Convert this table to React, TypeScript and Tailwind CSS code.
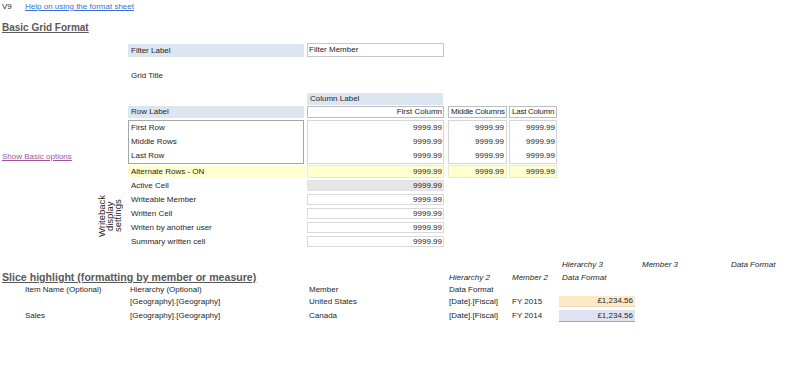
import React from "react";

const box = "border border-[#d6d6d6] flex flex-col";
const valRow = "h-[14px] flex items-center justify-end";

export default function App() {
  return (
    <div className="w-[800px] h-[373px] bg-white text-[#262626] text-[8px] font-['Liberation_Sans',Arial,sans-serif] grid grid-cols-[25px_103px_177px_141px_62px_51px_80px_90px_1fr] grid-rows-[13px_29px_16px_10px_15px_9px_13px_14px_16px_14px_16px_14px_14px_14px_14px_14px_14px_9px_14px_12px_12px_12px_15px] whitespace-nowrap">
      {/* header links */}
      <div className="col-start-1 row-start-1 pl-[2px] flex items-center">V9</div>
      <div className="col-start-2 col-span-3 row-start-1 flex items-center">
        <a href="#" className="text-[#3b6fd4] underline">Help on using the format sheet</a>
      </div>
      <div className="col-start-1 col-span-3 row-start-2 pl-[2px] flex items-center text-[10px] font-bold text-[#595959] underline">
        Basic Grid Format
      </div>

      {/* filter */}
      <div className="col-start-3 row-start-3 mt-[2px] mb-[1px] w-[176px] bg-[#dce6f1] pl-[3px] flex items-center">Filter Label</div>
      <div className="col-start-4 row-start-3 ml-[2px] w-[137px] mt-[1px] mb-[1px] border border-[#c8c8c8] pl-[1px] flex items-center">Filter Member</div>

      <div className="col-start-3 row-start-5 pl-[3px] flex items-center">Grid Title</div>

      {/* grid headers */}
      <div className="col-start-4 row-start-7 ml-[2px] w-[136px] mt-[1px] bg-[#dce6f1] pl-[3px] flex items-center">Column Label</div>
      <div className="col-start-3 row-start-8 mt-[1px] mb-[1px] w-[176px] bg-[#dce6f1] pl-[3px] flex items-center">Row Label</div>
      <div className="col-start-4 row-start-8 ml-[2px] w-[137px] mt-[1px] mb-[1px] border border-[#bdbdbd] pr-[1px] flex items-center justify-end">First Column</div>
      <div className="col-start-5 row-start-8 ml-[2px] w-[59px] mt-[1px] mb-[1px] border border-[#bdbdbd] pl-[2px] flex items-center tracking-[-0.25px]">Middle Columns</div>
      <div className="col-start-6 row-start-8 ml-[1px] w-[48px] mt-[1px] mb-[1px] border border-[#bdbdbd] pl-[2px] flex items-center tracking-[-0.25px]">Last Column</div>

      {/* body rows */}
      <div className="col-start-3 row-start-9 row-span-3 my-[1px] w-[176px] border border-[#a6a6a6] flex flex-col">
        {["First Row", "Middle Rows", "Last Row"].map((r) => (
          <div key={r} className="h-[14px] pl-[2px] flex items-center">{r}</div>
        ))}
      </div>
      <div className={`col-start-4 row-start-9 row-span-3 my-[1px] ml-[2px] w-[137px] pr-[1px] ${box}`}>
        {[0, 1, 2].map((i) => <div key={i} className={valRow}>9999.99</div>)}
      </div>
      <div className={`col-start-5 row-start-9 row-span-3 my-[1px] ml-[2px] w-[59px] pr-[2px] ${box}`}>
        {[0, 1, 2].map((i) => <div key={i} className={valRow}>9999.99</div>)}
      </div>
      <div className={`col-start-6 row-start-9 row-span-3 my-[1px] ml-[1px] w-[48px] pr-[1px] ${box}`}>
        {[0, 1, 2].map((i) => <div key={i} className={valRow}>9999.99</div>)}
      </div>
      <div className="col-start-1 col-span-2 row-start-11 pl-[2px] flex items-center">
        <a href="#" className="text-[#a0559b] underline">Show Basic options</a>
      </div>

      {/* alternate rows */}
      <div className="col-start-3 row-start-12 mb-[1px] bg-[#ffffcf] pl-[3px] flex items-center">Alternate Rows - ON</div>
      <div className="col-start-4 row-start-12 mb-[1px] ml-[2px] w-[137px] bg-[#ffffcf] border border-[#ecebd0] pr-[1px] flex items-center justify-end">9999.99</div>
      <div className="col-start-5 row-start-12 mb-[1px] ml-[2px] w-[59px] bg-[#ffffcf] border border-[#ecebd0] pr-[2px] flex items-center justify-end">9999.99</div>
      <div className="col-start-6 row-start-12 mb-[1px] ml-[1px] w-[48px] bg-[#ffffcf] border border-[#ecebd0] pr-[1px] flex items-center justify-end">9999.99</div>

      {/* writeback */}
      <div className="col-start-2 row-start-13 row-span-5 pr-[6px] pt-[4px] flex items-center justify-end">
        <div className="[writing-mode:vertical-rl] rotate-180 text-center text-[9.5px] leading-[8px]">
          Writeback<br />display<br />settings
        </div>
      </div>
      {[
        ["Active Cell", "bg-[#e6e6e6] border-[#e2e2e2]"],
        ["Writeable Member", "border-[#d9d9d9]"],
        ["Written Cell", "border-[#d9d9d9]"],
        ["Writen by another user", "border-[#d9d9d9]"],
        ["Summary written cell", "border-[#d9d9d9]"],
      ].map(([label, cls], i) => (
        <React.Fragment key={label}>
          <div className="col-start-3 pt-[1px] pb-[2px] pl-[3px] flex items-center" style={{ gridRowStart: 13 + i }}>{label}</div>
          <div className={`col-start-4 mt-[1px] mb-[2px] ml-[2px] w-[137px] border pr-[1px] flex items-center justify-end ${cls}`} style={{ gridRowStart: 13 + i }}>9999.99</div>
        </React.Fragment>
      ))}

      {/* slice highlight */}
      <div className="col-start-7 row-start-19 pl-[3px] italic flex items-center">Hierarchy 3</div>
      <div className="col-start-8 row-start-19 pl-[3px] italic flex items-center">Member 3</div>
      <div className="col-start-9 row-start-19 pl-[2px] italic flex items-center">Data Format</div>

      <div className="col-start-1 col-span-4 row-start-20 pl-[2px] flex items-center text-[10.6px] font-bold text-[#595959] underline">
        Slice highlight (formatting by member or measure)
      </div>
      <div className="col-start-5 row-start-20 pl-[3px] italic flex items-center">Hierarchy 2</div>
      <div className="col-start-6 row-start-20 pl-[4px] italic flex items-center">Member 2</div>
      <div className="col-start-7 row-start-20 pl-[3px] italic flex items-center">Data Format</div>

      <div className="col-start-2 row-start-21 flex items-center">Item Name (Optional)</div>
      <div className="col-start-3 row-start-21 pl-[2px] flex items-center">Hierarchy (Optional)</div>
      <div className="col-start-4 row-start-21 pl-[4px] flex items-center">Member</div>
      <div className="col-start-5 row-start-21 pl-[3px] flex items-center">Data Format</div>

      <div className="col-start-3 row-start-22 pl-[2px] flex items-center">[Geography].[Geography]</div>
      <div className="col-start-4 row-start-22 pl-[4px] flex items-center">United States</div>
      <div className="col-start-5 row-start-22 pl-[3px] flex items-center">[Date].[Fiscal]</div>
      <div className="col-start-6 row-start-22 pl-[4px] flex items-center">FY 2015</div>
      <div className="col-start-7 row-start-22 mb-[1px] w-[76px] bg-[#fde9c6] border-b border-[#e8d8b8] pr-[2px] flex items-center justify-end">£1,234.56</div>

      <div className="col-start-2 row-start-23 flex items-center">Sales</div>
      <div className="col-start-3 row-start-23 pl-[2px] flex items-center">[Geography].[Geography]</div>
      <div className="col-start-4 row-start-23 pl-[4px] flex items-center">Canada</div>
      <div className="col-start-5 row-start-23 pl-[3px] flex items-center">[Date].[Fiscal]</div>
      <div className="col-start-6 row-start-23 pl-[4px] flex items-center">FY 2014</div>
      <div className="col-start-7 row-start-23 mt-[2px] mb-[1px] w-[76px] bg-[#dfe3f1] border-b border-[#a6a6a6] pr-[2px] flex items-center justify-end">£1,234.56</div>
    </div>
  );
}
